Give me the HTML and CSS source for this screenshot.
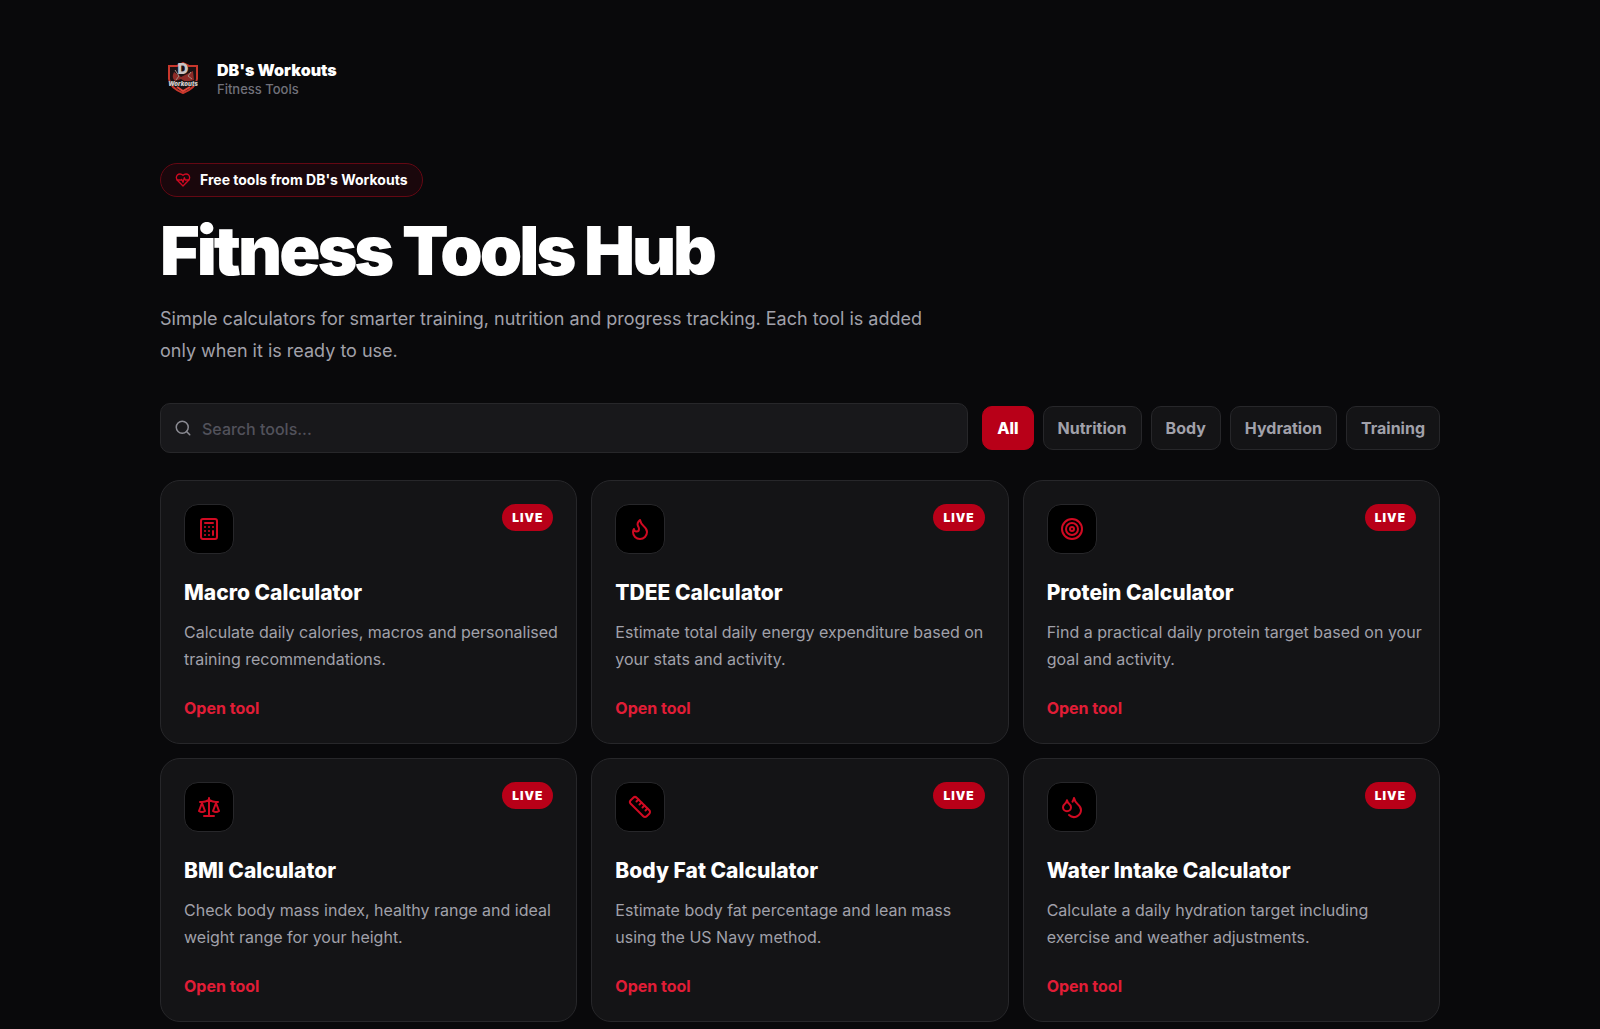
FILE: index.html
```html
<!DOCTYPE html>
<html lang="en">
<head>
<meta charset="utf-8">
<meta name="viewport" content="width=device-width, initial-scale=1">
<title>Fitness Tools Hub</title>
<link rel="stylesheet" href="styles.css">
</head>
<body>
<div class="page">
  <header class="brand">
    <svg class="brand-logo" viewBox="0 0 46 46" aria-hidden="true">
      <path d="M9 11 L17 11 L23 8 L29 11 L37 11 L37 24 Q36 33 23 38 Q10 33 9 24 Z" fill="#1b1113" stroke="#c8372c" stroke-width="2"/>
      <path d="M14 17 q-3 6 1 9 l6-2 5 3 8-2 -1-9 -6 3 -6 3z" fill="#8d2b27"/>
      <path d="M15 15 l4 6 -3 4 M31 17 l-3 4 4 3" fill="none" stroke="#a58e83" stroke-width="1"/>
      <path d="M17 32 L23 36 L30 32" fill="none" stroke="#e2473b" stroke-width="2"/>
      <rect x="9" y="26" width="29" height="5" fill="#1b1718"/>
      <text class="logo-letter" x="23" y="19" text-anchor="middle">D</text>
      <text class="logo-word" x="23" y="31" text-anchor="middle">Workouts</text>
    </svg>
    <div class="brand-text">
      <div class="brand-name">DB's Workouts</div>
      <div class="brand-sub">Fitness Tools</div>
    </div>
  </header>

  <main>
    <section class="hero">
      <div class="pill">
        <svg class="icon icon-small" viewBox="0 0 24 24" aria-hidden="true"><path d="M19 14c1.49-1.46 3-3.21 3-5.5A5.5 5.5 0 0 0 16.5 3c-1.76 0-3 .5-4.5 2-1.5-1.5-2.74-2-4.5-2A5.5 5.5 0 0 0 2 8.500c0 2.300 1.500 4.050 3 5.500l7 7Z"/><path d="M3.220 12H9.500l.5-1 2 4.500 2-7 1.500 3.500h5.270"/></svg>
        <span>Free tools from DB's Workouts</span>
      </div>
      <h1>Fitness Tools Hub</h1>
      <p class="lead">Simple calculators for smarter training, nutrition and progress tracking. Each tool is added only when it is ready to use.</p>
    </section>

    <section class="toolbar">
      <label class="search">
        <svg class="icon search-icon" viewBox="0 0 24 24" aria-hidden="true"><circle cx="11" cy="11" r="8"/><path d="m21 21-4.300-4.300"/></svg>
        <input type="search" placeholder="Search tools..." aria-label="Search tools">
      </label>
      <div class="filters">
        <button type="button" class="filter active">All</button>
        <button type="button" class="filter">Nutrition</button>
        <button type="button" class="filter">Body</button>
        <button type="button" class="filter">Hydration</button>
        <button type="button" class="filter">Training</button>
      </div>
    </section>

    <section class="grid">
      <article class="card">
        <div class="card-top">
          <div class="tile"><svg class="icon" viewBox="0 0 24 24" aria-hidden="true"><rect x="4" y="2" width="16" height="20" rx="2"/><path d="M8 6h8M16 14v4M16 10h.01M12 10h.01M8 10h.01M12 14h.01M8 14h.01M12 18h.01M8 18h.01"/></svg></div>
          <span class="live">LIVE</span>
        </div>
        <h2>Macro Calculator</h2>
        <p>Calculate daily calories, macros and personalised training recommendations.</p>
        <a href="#macro">Open tool</a>
      </article>
      <article class="card">
        <div class="card-top">
          <div class="tile"><svg class="icon" viewBox="0 0 24 24" aria-hidden="true"><path d="M8.500 14.500A2.500 2.500 0 0 0 11 12c0-1.380-.5-2-1-3-1.072-2.143-.224-4.054 2-6 .5 2.500 2 4.900 4 6.500 2 1.600 3 3.500 3 5.500a7 7 0 1 1-14 0c0-1.153.433-2.294 1-3a2.500 2.500 0 0 0 2.500 2.500z"/></svg></div>
          <span class="live">LIVE</span>
        </div>
        <h2>TDEE Calculator</h2>
        <p>Estimate total daily energy expenditure based on your stats and activity.</p>
        <a href="#tdee">Open tool</a>
      </article>
      <article class="card">
        <div class="card-top">
          <div class="tile"><svg class="icon" viewBox="0 0 24 24" aria-hidden="true"><circle cx="12" cy="12" r="10"/><circle cx="12" cy="12" r="6"/><circle cx="12" cy="12" r="2"/></svg></div>
          <span class="live">LIVE</span>
        </div>
        <h2>Protein Calculator</h2>
        <p>Find a practical daily protein target based on your goal and activity.</p>
        <a href="#protein">Open tool</a>
      </article>
      <article class="card">
        <div class="card-top">
          <div class="tile"><svg class="icon" viewBox="0 0 24 24" aria-hidden="true"><path d="m16 16 3-8 3 8c-.87.65-1.920 1-3 1s-2.130-.35-3-1ZM2 16l3-8 3 8c-.87.65-1.920 1-3 1s-2.130-.35-3-1ZM7 21h10M12 3v18M3 7h2c2 0 5-1 7-2 2 1 5 2 7 2h2"/></svg></div>
          <span class="live">LIVE</span>
        </div>
        <h2>BMI Calculator</h2>
        <p>Check body mass index, healthy range and ideal weight range for your height.</p>
        <a href="#bmi">Open tool</a>
      </article>
      <article class="card">
        <div class="card-top">
          <div class="tile"><svg class="icon" viewBox="0 0 24 24" aria-hidden="true"><path d="M21.300 15.300a2.400 2.400 0 0 1 0 3.400l-2.600 2.600a2.400 2.400 0 0 1-3.400 0L2.700 8.700a2.410 2.410 0 0 1 0-3.400l2.600-2.600a2.410 2.410 0 0 1 3.400 0Z"/><path d="m14.500 12.500 2-2M11.500 9.500l2-2M8.500 6.500l2-2M17.500 15.500l2-2"/></svg></div>
          <span class="live">LIVE</span>
        </div>
        <h2>Body Fat Calculator</h2>
        <p>Estimate body fat percentage and lean mass using the US Navy method.</p>
        <a href="#body-fat">Open tool</a>
      </article>
      <article class="card">
        <div class="card-top">
          <div class="tile"><svg class="icon" viewBox="0 0 24 24" aria-hidden="true"><path d="M7 16.300c2.200 0 4-1.830 4-4.050 0-1.160-.57-2.260-1.710-3.190S7.290 6.750 7 5.300c-.29 1.450-1.140 2.840-2.290 3.760S3 11.100 3 12.250c0 2.220 1.800 4.050 4 4.050z"/><path d="M12.560 6.600A10.970 10.970 0 0 0 14 3.020c.5 2.500 2 4.900 4 6.500s3 3.500 3 5.500a6.980 6.980 0 0 1-11.910 4.970"/></svg></div>
          <span class="live">LIVE</span>
        </div>
        <h2>Water Intake Calculator</h2>
        <p>Calculate a daily hydration target including exercise and weather adjustments.</p>
        <a href="#water">Open tool</a>
      </article>
    </section>
  </main>
</div>
</body>
</html>
```

FILE: styles.css
```css
* { box-sizing: border-box; }

body {
  margin: 0;
  background: #09090b;
  color: #fff;
  font-family: Inter, "Liberation Sans", sans-serif;
  font-size: 16px;
}

h1, h2, p { margin: 0; }

.page {
  width: 80%;
  min-width: 320px;
  margin: 0 auto;
  padding: 55px 0 6px;
}

.icon {
  width: 24px;
  height: 24px;
  flex: none;
  fill: none;
  stroke: #d00a22;
  stroke-width: 2;
  stroke-linecap: round;
  stroke-linejoin: round;
}
.icon-small { width: 16px; height: 16px; }

.brand { display: flex; align-items: center; gap: 11px; }
.brand-logo { width: 46px; height: 46px; }
.brand-text { padding-top: 2px; }
.logo-letter { font-size: 15px; font-weight: 900; fill: #c9c3c3; }
.logo-word { font-size: 6px; font-weight: 900; font-style: italic; fill: #d0caca; }
.brand-name { font-size: 16px; line-height: 20px; font-weight: 900; }
.brand-sub { font-size: 13px; line-height: 18px; font-weight: 500; color: #71717a; }

.hero { padding-top: 62px; }
.pill {
  display: inline-flex;
  align-items: center;
  gap: 9px;
  height: 34px;
  padding: 0 14px 1px;
  border: 1px solid #640813;
  border-radius: 17px;
  background: #1a070c;
  font-size: 14px;
  font-weight: 700;
}
h1 {
  margin-top: 17px;
  font-size: 68px;
  line-height: 72px;
  font-weight: 900;
  letter-spacing: -3px;
}
.lead {
  max-width: 780px;
  margin-top: 17px;
  font-size: 18px;
  line-height: 32px;
  color: #a1a1aa;
}

.toolbar {
  display: flex;
  align-items: center;
  gap: 14px;
  margin: 36px 0 27px;
}
.search {
  display: flex;
  flex: 1;
  align-items: center;
  gap: 10px;
  height: 50px;
  padding: 0 13px;
  border: 1px solid #27272a;
  border-radius: 10px;
  background: #18181b;
}
.search-icon { width: 18px; height: 18px; stroke: #8b8b93; }
.search input {
  flex: 1;
  min-width: 0;
  padding: 2px 0 0;
  border: 0;
  outline: 0;
  background: none;
  color: #fff;
  font: 500 16px/24px Inter, "Liberation Sans", sans-serif;
}
.search input::placeholder { color: #52525b; opacity: 1; }

.filters { display: flex; flex-wrap: wrap; gap: 9px; }
.filter {
  height: 44px;
  padding: 0 14px;
  border: 1px solid #27272a;
  border-radius: 10px;
  background: #141416;
  color: #a1a1aa;
  font: 700 16px/24px Inter, "Liberation Sans", sans-serif;
}
.filter.active { border-color: #b80018; background: #b80018; color: #fff; font-weight: 800; }

.grid {
  display: grid;
  grid-template-columns: repeat(3, 1fr);
  gap: 14px;
}
.card {
  padding: 23px 23px 24px;
  border: 1px solid #27272a;
  border-radius: 20px;
  background: #141416;
}
.card-top { display: flex; justify-content: space-between; align-items: flex-start; }
.tile {
  display: grid;
  place-items: center;
  width: 50px;
  height: 50px;
  border: 1px solid #27272a;
  border-radius: 14px;
  background: #000;
}
.live {
  padding: 0 10px;
  border-radius: 14px;
  background: #b80018;
  font-size: 12px;
  line-height: 27px;
  font-weight: 900;
  letter-spacing: 1px;
}
.card h2 {
  margin-top: 26px;
  font-size: 21px;
  line-height: 26px;
  font-weight: 800;
}
.card p {
  margin: 13px -8px 0 0;
  line-height: 27px;
  color: #a1a1aa;
}
.card a {
  display: inline-block;
  margin-top: 24px;
  line-height: 22px;
  font-weight: 700;
  color: #e11d36;
  text-decoration: none;
}

@media (max-width: 1000px) {
  .grid { grid-template-columns: repeat(2, 1fr); }
  .toolbar { flex-direction: column; align-items: stretch; }
  .search { flex: none; }
}
@media (max-width: 640px) {
  .grid { grid-template-columns: 1fr; }
}
```
